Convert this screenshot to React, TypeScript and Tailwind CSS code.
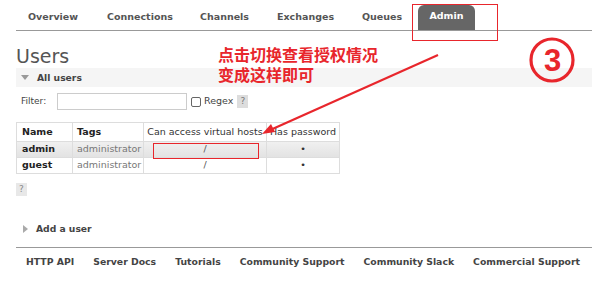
import React from "react";

const font = { fontFamily: '"DejaVu Sans", Verdana, sans-serif' };

export default function App() {
  const tabs: [string, string][] = [
    ["Overview", "w-[79px]"],
    ["Connections", "w-[93px]"],
    ["Channels", "w-[77px]"],
    ["Exchanges", "w-[85px]"],
    ["Queues", "w-[56px]"],
  ];
  const footer = ["HTTP API", "Server Docs", "Tutorials", "Community Support", "Community Slack", "Commercial Support"];
  return (
    <div className="relative w-[592px] h-[293px] bg-white overflow-hidden text-[#484848]" style={font}>
      {/* nav */}
      <div className="ml-[16px] h-[31px] border-b border-[#999] flex items-end pl-[12px]">
        {tabs.map(([t, w]) => (
          <div key={t} className={`${w} text-[9.5px] leading-[14px] font-bold text-[#555] pb-[6px]`}>{t}</div>
        ))}
        <div className="h-[25px] w-[57px] rounded-t-[6px] bg-[#666] text-white text-[9.5px] font-bold flex items-center justify-center pb-[2px]">Admin</div>
      </div>
      {/* users */}
      <div className="ml-[16px] mt-[14px] text-[19px] leading-[22px] text-[#555]">Users</div>
      <div className="ml-[16px] mt-[1px] h-[19px] bg-[#f5f5f5] flex items-center">
        <span className="ml-[5px] w-0 h-0 border-l-[4px] border-r-[4px] border-t-[5px] border-l-transparent border-r-transparent border-t-[#999]"></span>
        <span className="ml-[8px] text-[9.2px] font-bold text-[#444]">All users</span>
      </div>
      {/* filter */}
      <div className="ml-[21px] mt-[6px] flex items-center h-[17px] text-[9px] text-[#444]">
        <span className="w-[36px]">Filter:</span>
        <div className="w-[130px] h-[17px] border border-[#ccc] bg-white"></div>
        <div className="ml-[4px] w-[10px] h-[10px] border border-[#666] rounded-[2px] bg-white"></div>
        <span className="ml-[3px] text-[9.5px]">Regex</span>
        <span className="ml-[4px] w-[11px] h-[13px] bg-[#ddd] text-[#777] flex items-center justify-center text-[9px]">?</span>
      </div>
      {/* table */}
      <table className="ml-[16px] mt-[12px] border-collapse text-[9.5px]">
        <thead>
          <tr className="h-[19px]">
            <th className="w-[56px] border border-[#ddd] text-left pl-[5px] font-bold text-[#222]">Name</th>
            <th className="w-[71px] border border-[#ddd] text-left pl-[4px] font-bold text-[#222]">Tags</th>
            <th className="w-[123px] border border-[#ddd] font-normal text-[#333]">Can access virtual hosts</th>
            <th className="w-[73px] border border-[#ddd] font-normal text-[#333]">Has password</th>
          </tr>
        </thead>
        <tbody>
          <tr className="h-[16px] bg-gradient-to-b from-[#f0f0f0] to-[#e2e2e2]">
            <td className="border border-[#ddd] pl-[5px] font-bold text-[#222]">admin</td>
            <td className="border border-[#ddd] pl-[4px] text-[#777]">administrator</td>
            <td className="border border-[#ddd] text-center text-[#555]">/</td>
            <td className="border border-[#ddd] text-center text-[#333]">•</td>
          </tr>
          <tr className="h-[16px] bg-white">
            <td className="border border-[#ddd] pl-[5px] font-bold text-[#222]">guest</td>
            <td className="border border-[#ddd] pl-[4px] text-[#777]">administrator</td>
            <td className="border border-[#ddd] text-center text-[#555]">/</td>
            <td className="border border-[#ddd] text-center text-[#333]">•</td>
          </tr>
        </tbody>
      </table>
      <div className="ml-[16px] mt-[9px] w-[11px] h-[13px] bg-[#e8e8e8] text-[#888] text-[9px] flex items-center justify-center">?</div>
      {/* add a user */}
      <div className="ml-[23px] mt-[26px] flex items-center h-[14px]">
        <span className="w-0 h-0 border-t-[4px] border-b-[4px] border-l-[5px] border-t-transparent border-b-transparent border-l-[#aaa]"></span>
        <span className="ml-[8px] text-[9.2px] font-bold text-[#444]">Add a user</span>
      </div>
      {/* footer */}
      <div className="ml-[16px] mt-[11px] border-t border-[#999] pt-[7px] pl-[10px] flex gap-[19px] text-[9.3px] font-bold text-[#444]">
        {footer.map((f) => (
          <span key={f}>{f}</span>
        ))}
      </div>

      {/* annotations */}
      <div className="absolute left-[412px] top-[4px] w-[86px] h-[37px] border-[1.5px] border-[#e8262c]"></div>
      <div className="absolute left-[153px] top-[143px] w-[106px] h-[16px] border-[1.5px] border-[#e8262c]"></div>
      <div
        className="absolute left-[218px] top-[44px] text-[16px] leading-[20px] font-bold text-[#e8262c]"
        style={{ fontFamily: '"Noto Sans CJK SC", sans-serif' }}
      >
        <div>点击切换查看授权情况</div>
        <div>变成这样即可</div>
      </div>
      <svg className="absolute left-0 top-0" width="592" height="293">
        <circle cx="552" cy="60" r="21" fill="none" stroke="#e8262c" strokeWidth="3.2" />
        <text x="552.5" y="71" textAnchor="middle" fontSize="31" fontWeight="bold" fill="#e8262c" fontFamily="Liberation Sans, sans-serif">3</text>
        <line x1="438" y1="55" x2="268" y2="131" stroke="#e8262c" strokeWidth="2.2" />
        <polygon points="262,134 271,124 275,132" fill="#e8262c" />
      </svg>
    </div>
  );
}
